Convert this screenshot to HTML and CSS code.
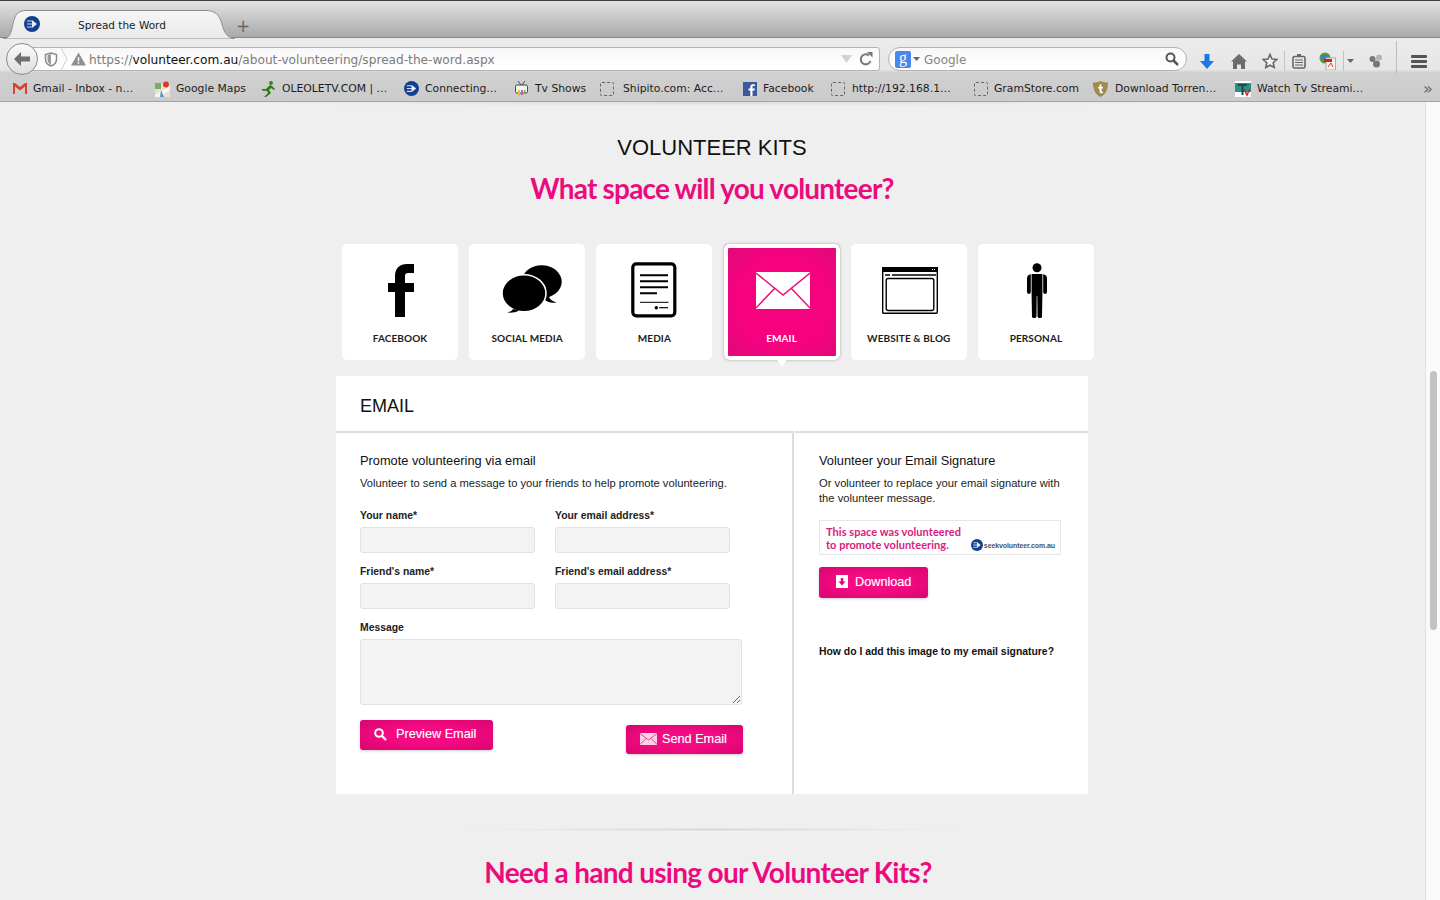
FILE: index.html
```html
<!DOCTYPE html>
<html lang="en">
<head>
    <meta charset="utf-8">
    <title>Spread the Word</title>
    <link rel="stylesheet" href="styles.css">
</head>
<body>
    <svg class="defs" width="0" height="0">
        <symbol id="seek" viewBox="0 0 16 16">
            <circle cx="8" cy="8" r="8" fill="#12408f"/>
            <path d="M3 5h5M3 8h6M3 11h5" stroke="#cfe0f5" stroke-width="1.2"/>
            <path d="M8 4l5 4-5 4z" fill="#e6effa"/>
        </symbol>
    </svg>

    <!-- tab strip -->
    <div class="tabbar">
        <div class="tab">
            <svg class="tab-shape" width="232" height="29" viewBox="0 0 232 29">
                <defs>
                    <linearGradient id="tabfill" x1="0" y1="0" x2="0" y2="1">
                        <stop offset="0" stop-color="#f6f6f6"/>
                        <stop offset="1" stop-color="#e9e9e9"/>
                    </linearGradient>
                </defs>
                <path d="M0 29C7 28 8 23 10 14C12 4 15 .5 24 .5H202C212 .5 216 4 219 14C221 23 225 28 232 29Z" fill="url(#tabfill)" stroke="#8e8e8e"/>
            </svg>
            <svg class="tab-icon" width="16" height="16"><use href="#seek"/></svg>
            <span class="tab-title">Spread the Word</span>
        </div>
        <span class="new-tab">+</span>
    </div>

    <div class="toolbox">
        <!-- address row -->
        <div class="navbar">
            <div class="back">
                <svg width="18" height="16" viewBox="0 0 18 16"><path d="M8 1L1 8l7 7V10.500h9v-5H8z" fill="#6f6f6f"/></svg>
            </div>
            <div class="urlbar">
                <svg width="14" height="15" viewBox="0 0 14 15"><path d="M7 1l5.500 1.500V7c0 3.500-2.500 6-5.500 7C4 13 1.500 10.500 1.500 7V2.500z" fill="#fff" stroke="#8a8a8a" stroke-width="1.500"/><path d="M7 2v11C5 12 3.500 10 3.500 7V3.200z" fill="#9a9a9a"/></svg>
                <svg class="url-chevron" width="7" height="22" viewBox="0 0 7 22"><path d="M0 0l6 11-6 11" fill="none" stroke="#cfcfcf"/></svg>
                <svg class="url-warn" width="15" height="14" viewBox="0 0 16 14"><path d="M8 0l8 14H0z" fill="#8f8f8f"/><path d="M7.200 5h1.600v4.500H7.200zM7.200 10.500h1.600V12H7.200z" fill="#fff"/></svg>
                <span class="url-text">https://<b>volunteer.com.au</b>/about-volunteering/spread-the-word.aspx</span>
                <svg class="url-drop" width="11" height="8" viewBox="0 0 11 8"><path d="M0 0h11L5.500 8z" fill="#d2d2d2"/></svg>
                <svg width="14" height="14" viewBox="0 0 14 14"><path d="M11.500 9A5 5 0 1 1 10 3.500" fill="none" stroke="#777" stroke-width="2"/><path d="M8 0h5.500v5.500z" fill="#777"/></svg>
            </div>
            <div class="searchbar">
                <span class="google-g">g</span>
                <svg width="7" height="4" viewBox="0 0 7 4"><path d="M0 0h7L3.500 4z" fill="#666"/></svg>
                <span class="search-text">Google</span>
                <svg width="14" height="14" viewBox="0 0 14 14"><circle cx="5.500" cy="5.500" r="4" fill="none" stroke="#555" stroke-width="2"/><path d="M8.500 8.500L13 13" stroke="#555" stroke-width="2.500"/></svg>
            </div>
            <div class="tools">
                <svg width="14" height="15" viewBox="0 0 14 15"><path d="M4.500 0h5v7H14l-7 8-7-8h4.500z" fill="#1a78e6"/></svg>
                <svg width="16" height="15" viewBox="0 0 16 15"><path d="M8 0l8 7.500h-2V15h-4v-4.500H6V15H2V7.500H0z" fill="#6c6c6c"/></svg>
                <svg width="16" height="16" viewBox="0 0 16 16"><path d="M8 1.500l2 4.500 4.800.5-3.600 3.200 1 4.800L8 12.200l-4.200 2.300 1-4.800L1.200 6.500 6 6z" fill="#f2f2f2" stroke="#666" stroke-width="1.600"/></svg>
                <span class="tool-sep"></span>
                <svg width="14" height="15" viewBox="0 0 14 15"><rect x="1" y="2.500" width="12" height="11.500" rx="1.500" fill="none" stroke="#666" stroke-width="1.600"/><path d="M3 6h8M3 8.500h8M3 11h8M5 2.500h4" stroke="#666" stroke-width="1.200"/><rect x="5" y="0" width="4" height="3" fill="#666"/></svg>
                <svg width="17" height="18" viewBox="0 0 17 18"><circle cx="6" cy="6" r="5.500" fill="#4f9a4b"/><path d="M2 3h6v4H4zM8 8h3v2H8z" fill="#3d7fc4"/><rect x="7" y="6" width="9.500" height="12" fill="#f4f4f4" stroke="#aaa"/><rect x="5" y="7" width="8" height="3" fill="#e01b1b"/><path d="M9 15l3-4 2 4" fill="none" stroke="#d43a3a"/></svg>
                <span class="tool-sep"></span>
                <svg width="7" height="4" viewBox="0 0 7 4"><path d="M0 0h7L3.500 4z" fill="#666"/></svg>
                <svg width="14" height="14" viewBox="0 0 14 14"><circle cx="3.500" cy="5" r="3" fill="#777"/><circle cx="10" cy="3.500" r="3" fill="#b5b5b5"/><circle cx="7.500" cy="10" r="3.500" fill="#777"/></svg>
                <span class="tool-sep tall"></span>
                <div class="menu"><i></i><i></i><i></i></div>
            </div>
        </div>

        <!-- bookmarks -->
        <div class="bookmarks">
            <a class="bm"><svg width="14" height="11" viewBox="0 0 14 11"><path d="M0 0h2l5 4 5-4h2v11h-2V3.500L7 7.500 2 3.500V11H0z" fill="#d9432f"/></svg>Gmail - Inbox - n…</a>
            <a class="bm"><svg width="15" height="16" viewBox="0 0 15 16"><rect y="2" width="15" height="14" fill="#e9e2c8"/><path d="M0 14L15 5v4L5 16H0z" fill="#f8f8f0"/><path d="M0 2h6v6H0z" fill="#79ab63"/><path d="M6 9l3 7H5z" fill="#5a8fd8"/><circle cx="11" cy="3.500" r="3" fill="#d73a30"/></svg>Google Maps</a>
            <a class="bm"><svg width="15" height="16" viewBox="0 0 15 16"><circle cx="10" cy="2" r="2" fill="#2a8a1c"/><path d="M9 4L5 8 1 8v1.500l5 .5 1 2-4 4h2l5-4-2-3 2-2 3 2 1-1-3-3z" fill="#2a7a18"/></svg>OLEOLETV.COM | …</a>
            <a class="bm"><svg width="15" height="15"><use href="#seek"/></svg>Connecting…</a>
            <a class="bm gap7"><svg width="13" height="16" viewBox="0 0 13 16"><path d="M3 0l3 4M10 0L7 4" stroke="#444"/><rect x=".500" y="4" width="12" height="8" rx="1.500" fill="#f4f4f4" stroke="#444"/><path d="M3 9h2v6H3z" fill="#d5c63a"/><path d="M6 9h2v5H6z" fill="#d8569a"/><path d="M9 9h1.500v4H9z" fill="#58b65a"/></svg>Tv Shows</a>
            <a class="bm gap9"><span class="blank"></span>Shipito.com: Acc…</a>
            <a class="bm"><svg width="14" height="14" viewBox="0 0 14 14"><rect width="14" height="14" fill="#3b5a9b"/><path d="M9.500 14V8.500h2l.3-2H9.500V5c0-.7.300-1 1-1h1.300V2.200H10C8 2.200 7.300 3.300 7.300 5v1.500H5.500v2h1.800V14z" fill="#fff"/></svg>Facebook</a>
            <a class="bm gap7"><span class="blank"></span>http://192.168.1…</a>
            <a class="bm"><span class="blank"></span>GramStore.com</a>
            <a class="bm gap7"><svg width="15" height="16" viewBox="0 0 15 16"><path d="M7.500 0C10 1.500 12.500 1.500 15 1.500 15 9 12.500 13.500 7.500 16 2.500 13.500 0 9 0 1.500 2.500 1.500 5 1.500 7.500 0z" fill="#a08a4c"/><path d="M6.500 3.500h2V6H10v1.500H8.500V10c0 .8.800 1 1.500.7v1.400c-1.800.500-3.500 0-3.500-1.900V7.500H5V6h1.500z" fill="#fff"/></svg>Download Torren…</a>
            <a class="bm"><svg width="16" height="16" viewBox="0 0 16 16"><rect width="16" height="16" fill="#fff"/><rect y="2" width="16" height="9" fill="#2c8f86"/><path d="M3 3h9v2H8.500v9H6.500V5H3z" fill="#134f4a"/><path d="M9 8l3 6 3-6" fill="none" stroke="#c8252c" stroke-width="1.500"/></svg>Watch Tv Streami…</a>
            <span class="bm-more">&raquo;</span>
        </div>
    </div>

    <div class="window">
        <main class="page">
            <div class="rule rule-top"></div>
            <h1 class="kits-title">VOLUNTEER KITS</h1>
            <h2 class="pink-title">What space will you volunteer?</h2>

            <div class="tiles">
                <a class="tile tile-facebook">
                    <div class="tile-icon">
                        <svg width="26" height="53" viewBox="0 0 26 53"><path d="M7 53V28H0V19H7V12C7 4 12 0 19 0H26V9H20C18 9 17 10 17 12V19H26V28H17V53Z"/></svg>
                    </div>
                    <span class="tile-label">FACEBOOK</span>
                </a>
                <a class="tile tile-social">
                    <div class="tile-icon">
                        <svg width="60" height="50" viewBox="0 0 60 50">
                            <ellipse cx="39.700" cy="16.700" rx="20" ry="16.500"/>
                            <path d="M46 30c1 3 3 6 8.500 7.500-5 1-9.500 0-13-4z"/>
                            <ellipse cx="22" cy="28.300" rx="22" ry="18.500" stroke="#fff" stroke-width="1.600"/>
                            <path d="M11 44c-1 2-3 3-6 3.500 4 .5 9 0 12-2z"/>
                        </svg>
                    </div>
                    <span class="tile-label">SOCIAL MEDIA</span>
                </a>
                <a class="tile">
                    <div class="tile-icon">
                        <svg width="46" height="56" viewBox="0 0 46 56">
                            <rect x="1.800" y="1.800" width="42" height="52" rx="3.500" fill="#fff" stroke="#000" stroke-width="3.200"/>
                            <path d="M9 13.300h28M9 19.300h28M9 25.300h28M9 31.300h17" stroke="#000" stroke-width="2"/>
                            <path d="M9 40.300h28.500" stroke="#000"/>
                            <circle cx="25.300" cy="45.700" r="1.700"/>
                            <path d="M28.300 45.700H37" stroke="#000" stroke-width="1.200"/>
                        </svg>
                    </div>
                    <span class="tile-label">MEDIA</span>
                </a>
                <a class="tile tile-email active">
                    <div class="tile-icon">
                        <svg width="54" height="37" viewBox="0 0 54 37">
                            <rect width="54" height="37" fill="#fff"/>
                            <path d="M0 1l27 22L54 1M0 36l19-20M54 36L35 16" fill="none" stroke="#ee0a7f" stroke-width="1.500"/>
                        </svg>
                    </div>
                    <span class="tile-label">EMAIL</span>
                </a>
                <a class="tile tile-website">
                    <div class="tile-icon">
                        <svg width="56" height="47" viewBox="0 0 56 47">
                            <rect x=".700" y=".700" width="54.600" height="45.600" rx="1" fill="#fff" stroke="#000" stroke-width="1.400"/>
                            <rect width="56" height="5" fill="#000"/>
                            <path d="M50 2.500h4" stroke="#fff" stroke-dasharray="1 1"/>
                            <path d="M3 8h5M10 8h44" stroke="#000" stroke-width="1.400"/>
                            <rect x="4.200" y="11.500" width="47.600" height="32" rx="2" fill="#fff" stroke="#000" stroke-width="1.400"/>
                        </svg>
                    </div>
                    <span class="tile-label">WEBSITE &amp; BLOG</span>
                </a>
                <a class="tile tile-personal">
                    <div class="tile-icon">
                        <svg width="20" height="55" viewBox="0 0 20 55">
                            <circle cx="10" cy="4.700" r="4.500"/>
                            <path d="M4.600 11h10.800v21l-.4 21.500c0 2-4 2-4.500 0L10.300 33H9.700l-.2 20.500c-.5 2-4.500 2-4.500 0L4.600 32z"/>
                            <path d="M3.800 11.200C1.500 11.500 0 13 0 15.500V29c0 2.500 3.800 2.500 3.800 0zM16.200 11.200C18.500 11.500 20 13 20 15.500V29c0 2.500-3.800 2.500-3.800 0z"/>
                        </svg>
                    </div>
                    <span class="tile-label">PERSONAL</span>
                </a>
            </div>

            <section class="panel">
                <h3 class="panel-title">EMAIL</h3>
                <div class="panel-body">
                    <div class="col-left">
                        <h4>Promote volunteering via email</h4>
                        <p>Volunteer to send a message to your friends to help promote volunteering.</p>
                        <form class="form-grid">
                            <div class="field">
                                <label>Your name*</label>
                                <input type="text">
                            </div>
                            <div class="field">
                                <label>Your email address*</label>
                                <input type="text">
                            </div>
                            <div class="field">
                                <label>Friend's name*</label>
                                <input type="text">
                            </div>
                            <div class="field">
                                <label>Friend's email address*</label>
                                <input type="text">
                            </div>
                            <div class="field field-wide">
                                <label>Message</label>
                                <textarea></textarea>
                            </div>
                        </form>
                        <div class="actions">
                            <a class="btn btn-preview">
                                <svg width="13" height="13" viewBox="0 0 13 13"><circle cx="5" cy="5" r="3.800" fill="none" stroke="#fff" stroke-width="2"/><path d="M8 8l4 4" stroke="#fff" stroke-width="2.400"/></svg>
                                Preview Email
                            </a>
                            <a class="btn btn-send">
                                <svg width="17" height="12" viewBox="0 0 17 12"><rect width="17" height="12" fill="#fbd3e6"/><path d="M0 .5l8.500 6.500L17 .5M0 11.500l6-6M17 11.500l-6-6" fill="none" stroke="#e8408f"/></svg>
                                Send Email
                            </a>
                        </div>
                    </div>
                    <div class="col-right">
                        <h4>Volunteer your Email Signature</h4>
                        <p>Or volunteer to replace your email signature with the volunteer message.</p>
                        <div class="signature">
                            <span class="sig-text">This space was volunteered<br>to promote volunteering.</span>
                            <span class="sig-logo">
                                <svg width="12" height="12"><use href="#seek"/></svg>
                                <span>seekvolunteer.com.au</span>
                            </span>
                        </div>
                        <a class="btn btn-download">
                            <svg width="12" height="13" viewBox="0 0 12 13"><rect width="12" height="13" fill="#fff"/><path d="M4.800 3h2.400v3.500H9.500L6 10.500 2.500 6.500h2.300z" fill="#e6007a"/></svg>
                            Download
                        </a>
                        <a class="sig-help">How do I add this image to my email signature?</a>
                    </div>
                </div>
            </section>

            <div class="rule rule-bottom"></div>
            <h2 class="pink-title need-hand">Need a hand using our Volunteer Kits?</h2>
        </main>
        <div class="scrollbar"><div class="thumb"></div></div>
    </div>
</body>
</html>
```

FILE: styles.css
```css
html, body {
    margin: 0;
    padding: 0;
    height: 900px;
    overflow: hidden;
}

body {
    display: flex;
    flex-direction: column;
    font-family: "Liberation Sans", Arial, sans-serif;
    background-color: #efefef;
    color: #111;
}

.defs {
    position: absolute;
}

/* tab strip */
.tabbar {
    display: flex;
    align-items: flex-end;
    height: 38px;
    box-sizing: border-box;
    padding-left: 3px;
    border-top: 1px solid #3f3f3f;
    border-bottom: 1px solid #858585;
    background: linear-gradient(#e2e2e2, #a9a9a9);
    flex-shrink: 0;
}

.tab {
    position: relative;
    display: flex;
    align-items: center;
    width: 232px;
    height: 28px;
    margin-bottom: -1px;
    padding-left: 21px;
    box-sizing: border-box;
    font-family: "DejaVu Sans", sans-serif;
    font-size: 10.500px;
    color: #222;
}

.tab-shape {
    position: absolute;
    left: 0;
    top: 0;
}

.tab-icon {
    position: relative;
}

.tab-title {
    position: relative;
    margin: 2px 0 0 38px;
}

.new-tab {
    align-self: center;
    margin: 13px 0 0 1px;
    font-family: "DejaVu Sans", sans-serif;
    font-size: 17px;
    line-height: 20px;
    color: #666;
}

/* toolbars */
.toolbox {
    flex-shrink: 0;
    height: 64px;
    box-sizing: border-box;
    font-family: "DejaVu Sans", sans-serif;
    border-bottom: 1px solid #a4a4a4;
    background: linear-gradient(#ececec, #e6e6e6 50%, #d0d0d0 55%, #cbcbcb);
}

.navbar {
    display: flex;
    align-items: flex-start;
    height: 34px;
    padding: 9px 0 0 6px;
    box-sizing: border-box;
}

.back {
    position: relative;
    z-index: 1;
    display: flex;
    align-items: center;
    justify-content: center;
    width: 32px;
    height: 32px;
    margin-top: -4px;
    box-sizing: border-box;
    border: 1px solid #8a8a8a;
    border-radius: 50%;
    background: linear-gradient(#fafafa, #dedede);
}

.urlbar {
    display: flex;
    align-items: center;
    width: 853px;
    height: 24px;
    margin-left: -11px;
    padding: 0 6px 0 16px;
    box-sizing: border-box;
    border: 1px solid #b4b4b4;
    border-radius: 3px;
    background: linear-gradient(#f8f8f8, #fff);
}

.url-chevron {
    margin-left: 3px;
}

.url-warn {
    margin-left: 3px;
}

.url-text {
    flex: 1;
    margin: 1px 0 0 3px;
    font-size: 12.150px;
    color: #7b7b7b;
    white-space: nowrap;
}

.url-text b {
    font-weight: normal;
    color: #111;
}

.url-drop {
    margin-right: 7px;
}

.searchbar {
    display: flex;
    align-items: center;
    width: 299px;
    height: 24px;
    margin-left: 8px;
    padding: 0 7px 0 6px;
    box-sizing: border-box;
    border: 1px solid #b4b4b4;
    border-radius: 12px;
    background: linear-gradient(#f8f8f8, #fff);
}

.google-g {
    display: block;
    width: 16px;
    height: 17px;
    border-radius: 2px;
    background-color: #4a87ee;
    color: #fff;
    font-family: "Liberation Serif", serif;
    font-size: 16px;
    line-height: 13px;
    text-align: center;
}

.searchbar svg:nth-of-type(1) {
    margin-left: 2px;
}

.search-text {
    flex: 1;
    margin: 1px 0 0 4px;
    font-size: 12px;
    color: #858585;
}

.tools {
    display: grid;
    grid-template-columns: 32px 32px 29px 1px 27px 31px 1px 12px 40px 1px 43px;
    align-items: center;
    justify-items: center;
    height: 24px;
    margin-left: 4px;
}

.tool-sep {
    width: 1px;
    height: 20px;
    background-color: #c2c2c2;
}

.tool-sep.tall {
    height: 34px;
    margin-top: -6px;
    background-color: #bcbcbc;
}

.menu {
    display: flex;
    flex-direction: column;
    gap: 2px;
}

.menu i {
    display: block;
    width: 16px;
    height: 3px;
    border-radius: 1px;
    background-color: #555;
}

.bookmarks {
    display: grid;
    grid-template-columns: 142px 106px 143px 111px 85px 143px 88px 143px 119px 142px 180px 26px;
    align-items: center;
    height: 30px;
    padding: 3px 0 0 13px;
    box-sizing: border-box;
    font-size: 10.800px;
    color: #1c1c1c;
    white-space: nowrap;
}

.bm {
    display: flex;
    align-items: center;
    gap: 6px;
}

.bm.gap7 {
    gap: 7px;
}

.bm.gap9 {
    gap: 9px;
}

.blank {
    width: 12px;
    height: 12px;
    border: 1px dashed #666;
    border-radius: 2px;
}

.bm-more {
    font-size: 16px;
    line-height: 16px;
    text-align: center;
    color: #666;
}

/* page */
.window {
    display: flex;
    flex: 1;
    min-height: 0;
    overflow: hidden;
}

.page {
    flex: 1;
    display: flex;
    flex-direction: column;
    align-items: center;
    padding-right: 1px;
}

.rule {
    height: 3px;
    width: 500px;
    background: radial-gradient(ellipse at center, #d4d4d4, rgba(239, 239, 239, 0) 70%);
}

.rule-top {
    flex-shrink: 0;
    width: 1000px;
    height: 4px;
    background: radial-gradient(ellipse at 50% 0, #dcdcdc, rgba(239, 239, 239, 0) 70%);
}

.kits-title {
    margin: 28px 0 0;
    font-size: 22px;
    font-weight: normal;
    line-height: 28px;
    color: #111;
}

.pink-title {
    margin: 9px 0 0;
    font-family: Lato, sans-serif;
    font-size: 28px;
    font-weight: 700;
    line-height: 34px;
    letter-spacing: -0.8px;
    color: #ec0b7f;
    flex-shrink: 0;
}

.tiles {
    display: flex;
    justify-content: space-between;
    width: 752px;
    margin: 39px 0 0 12px;
    flex-shrink: 0;
}

.tile {
    position: relative;
    display: flex;
    flex-direction: column;
    align-items: center;
    width: 116px;
    height: 116px;
    border-radius: 5px;
    background-color: #fff;
}

.tile-icon {
    display: flex;
    align-items: center;
    justify-content: center;
    height: 84px;
    margin-top: 4px;
}

/* artwork is not centred over the label in these */
.tile-facebook .tile-icon {
    margin-left: 2px;
}

.tile-social .tile-icon {
    margin-left: 9px;
}

.tile-email .tile-icon {
    margin-left: 3px;
}

.tile-website .tile-icon {
    margin-left: 3px;
}

.tile-personal .tile-icon {
    margin-left: 2px;
}

.tile-label {
    font-family: Lato, sans-serif;
    font-size: 10px;
    font-weight: 700;
    line-height: 12px;
    letter-spacing: 0.1px;
    color: #1c1c1c;
}

.tile.active {
    background: radial-gradient(circle at center, #f6027f 55%, #dc0a78);
    box-shadow: inset 0 0 0 4px #fff, 0 0 3px rgba(0, 0, 0, 0.3);
}

.tile.active .tile-label {
    color: #fff;
}

.tile.active::after {
    content: "";
    position: absolute;
    left: 51px;
    bottom: -7px;
    border-top: 11px solid #fff;
    border-left: 7px solid transparent;
    border-right: 7px solid transparent;
}

.panel {
    width: 752px;
    height: 418px;
    margin-top: 16px;
    flex-shrink: 0;
    background-color: #fff;
}

.panel-title {
    margin: 0;
    height: 55px;
    padding-left: 24px;
    font-size: 18px;
    font-weight: normal;
    line-height: 61px;
    color: #111;
}

.panel-body {
    display: flex;
    height: 363px;
}

.col-left {
    width: 458px;
    box-sizing: border-box;
    padding-left: 24px;
    border-top: 2px solid #ddd;
    border-right: 2px solid #ddd;
}

.col-right {
    flex: 1;
    margin-left: 1px;
    padding-left: 24px;
    border-top: 2px solid #ddd;
}

.col-left h4,
.col-right h4 {
    margin: 20px 0 0;
    font-size: 12.800px;
    font-weight: normal;
    line-height: 16px;
    color: #111;
}

.col-left p,
.col-right p {
    margin: 7px 0 0;
    width: 245px;
    font-size: 11.200px;
    line-height: 15px;
    color: #222;
}

.col-left p {
    width: auto;
}

.form-grid {
    display: grid;
    grid-template-columns: 175px 175px;
    column-gap: 20px;
    row-gap: 13px;
    margin-top: 19px;
}

.field label {
    display: block;
    margin-bottom: 5px;
    font-size: 10.400px;
    font-weight: bold;
    line-height: 12px;
    color: #222;
}

.field input,
.field textarea {
    display: block;
    box-sizing: border-box;
    width: 175px;
    height: 26px;
    margin: 0;
    border: 1px solid #e2e2e2;
    border-radius: 3px;
    background-color: #f3f3f3;
}

.field-wide {
    grid-column: 1 / 3;
}

.field textarea {
    width: 382px;
    height: 66px;
}

.actions {
    display: flex;
    justify-content: space-between;
    align-items: flex-start;
    width: 383px;
    margin-top: 15px;
}

.btn {
    display: inline-flex;
    align-items: center;
    box-sizing: border-box;
    padding-bottom: 2px;
    border-radius: 3px;
    background: radial-gradient(ellipse at center, #f40a82 40%, #d9056f);
    box-shadow: 0 1px 3px rgba(0, 0, 0, 0.2);
    font-size: 12.700px;
    color: #fff;
    text-shadow: 0 0 1px rgba(255, 255, 255, 0.4);
    white-space: nowrap;
}

.btn-preview {
    width: 133px;
    height: 30px;
    padding-left: 14px;
    gap: 9px;
}

.btn-send {
    width: 117px;
    height: 29px;
    margin-top: 5px;
    padding-left: 14px;
    gap: 5px;
}

.btn-download {
    width: 109px;
    height: 31px;
    margin-top: 12px;
    padding-left: 17px;
    gap: 7px;
}

.signature {
    display: flex;
    align-items: flex-end;
    justify-content: space-between;
    width: 242px;
    height: 35px;
    margin-top: 14px;
    box-sizing: border-box;
    padding: 0 5px 3px 6px;
    border: 1px solid #e6e6e6;
}

.sig-text {
    font-family: Lato, sans-serif;
    font-size: 11px;
    font-weight: 700;
    line-height: 13px;
    letter-spacing: 0.05px;
    color: #d9207f;
}

.sig-logo {
    display: flex;
    align-items: center;
    gap: 1px;
    font-size: 7px;
    font-weight: bold;
    letter-spacing: -0.1px;
    color: #4a5566;
}

.sig-help {
    display: block;
    margin-top: 48px;
    font-size: 10.400px;
    font-weight: bold;
    line-height: 12px;
    color: #111;
}

.rule-bottom {
    margin-top: 34px;
    flex-shrink: 0;
}

.need-hand {
    margin: 24px 8px 0 0;
    letter-spacing: -0.7px;
}

.scrollbar {
    flex-shrink: 0;
    width: 15px;
    box-sizing: border-box;
    padding: 269px 3px 0 4px;
    border-left: 1px solid #e4e4e4;
    background-color: #fafafa;
}

.thumb {
    height: 259px;
    border-radius: 4px;
    background-color: #c2c2c2;
}
```
